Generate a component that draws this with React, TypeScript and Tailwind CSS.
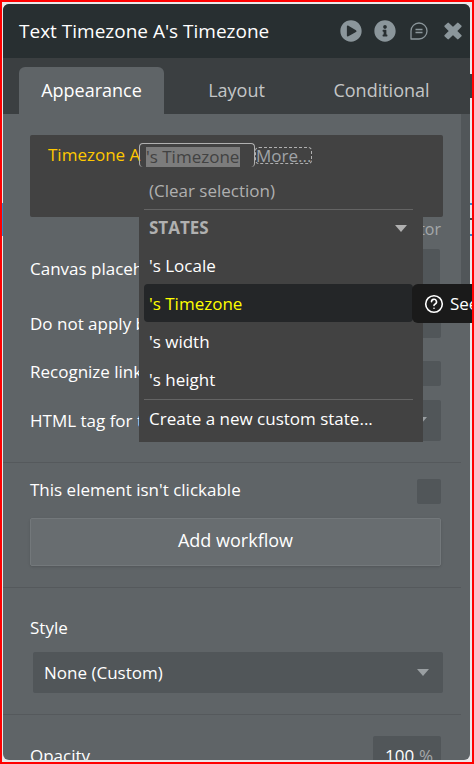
import React, { useState } from 'react';
import { FaPlayCircle, FaInfoCircle } from 'react-icons/fa';

const tabs = ['Appearance', 'Layout', 'Conditional'];
const states = ["'s Locale", "'s Timezone", "'s width", "'s height"];

const Caret: React.FC<{ className?: string }> = ({ className = '' }) => (
  <svg viewBox="0 0 12 7" className={`w-3 h-[7px] pointer-events-none ${className}`} fill="currentColor" aria-hidden="true">
    <path d="M0 0h12L6 7z" />
  </svg>
);

const Checkbox: React.FC<{ id: string }> = ({ id }) => (
  <input id={id} type="checkbox" className="appearance-none w-6 h-[25px] rounded-xs bg-[#515659] checked:bg-[#8b969b]" />
);

const Header: React.FC = () => (
  <header className="flex items-center justify-between h-[54px] shrink-0 pl-4 pr-2 rounded-t-md bg-[#282f31]">
    <h1 className="text-[19px] text-white whitespace-nowrap">Text Timezone A's Timezone</h1>
    <div className="flex items-center text-[#8b969b]">
      <button aria-label="Preview" className="mr-3"><FaPlayCircle size={22} /></button>
      <button aria-label="Info" className="mr-3.5"><FaInfoCircle size={22} /></button>
      <button aria-label="Comments" className="mr-4">
        <svg width="18" height="18" viewBox="0 0 18 18" fill="none" stroke="currentColor" strokeWidth="1.3">
          <path d="M1 17V9a8 8 0 1 1 8 8z" strokeLinejoin="round" />
          <path d="M5.5 7.5h7M5.5 10.5h7" />
        </svg>
      </button>
      <button aria-label="Close">
        <svg width="18" height="18" viewBox="0 0 18 18" fill="currentColor" stroke="currentColor" strokeWidth="2" strokeLinejoin="round">
          <path d="M4.2 1.6L9 6.2l4.8-4.6 2.8 2.7L11.9 9l4.7 4.7-2.8 2.7L9 11.8l-4.8 4.6-2.8-2.7L6.1 9 1.4 4.3z" />
        </svg>
      </button>
    </div>
  </header>
);

const StateMenu: React.FC = () => {
  const [active, setActive] = useState("'s Timezone");

  return (
    <div className="absolute left-[109px] top-8 z-10 w-[284px] pl-[5px] pr-2.5 bg-[#424242] text-white">
      <button className="block w-full h-[42px] pl-[5px] pt-1.5 text-left text-[#b0b0b0]">(Clear selection)</button>
      <div className="flex items-center justify-between h-[37px] pl-[5px] pr-1.5 border-t border-[#646464] font-bold text-[#b0b0b0]">
        STATES
        <Caret />
      </div>
      <div className="pb-px">
        {states.map((s) => (
          <div key={s} className="relative">
            <button
              onClick={() => setActive(s)}
              className={`block w-full h-[38px] pl-[5px] pt-0.5 text-left rounded-sm ${s === active ? 'bg-[#242628] text-[#ffff00]' : ''}`}
            >
              {s}
            </button>
            {s === active && (
              <a href="#reference" className="absolute left-[268px] top-0 flex items-center gap-1.5 h-[39px] w-[150px] pl-3 rounded-md bg-[#1a1a1a] text-white whitespace-nowrap">
                <svg width="20" height="20" viewBox="0 0 20 20" fill="none" stroke="currentColor" strokeWidth="1.6" strokeLinecap="round">
                  <circle cx="10" cy="10" r="8.3" />
                  <path d="M7.5 7.8a2.5 2.5 0 1 1 3.7 2.2c-.8.4-1.2.8-1.2 1.5" />
                  <path d="M10 14.2v.1" />
                </svg>
                See reference
              </a>
            )}
          </div>
        ))}
      </div>
      <button className="block w-full h-[43px] pl-[5px] pb-1 text-left border-t border-[#646464]">Create a new custom state...</button>
    </div>
  );
};

const Composer: React.FC = () => (
  <div className="relative h-[82px] mr-[-2px] pl-[18px] pt-2 rounded-xs bg-[#424242]">
    <div className="flex items-start">
      <span className="w-[91px] leading-6 text-[#ffc800] whitespace-nowrap">Timezone A</span>
      <div className="w-[116px] h-6 pl-1.5 pt-[3px] border border-b-0 border-[#b0b0b0] rounded">
        <input
          aria-label="Expression"
          readOnly
          value="'s Timezone"
          className="block w-[94px] h-5 bg-[#7c7c7c] text-[#424242] outline-none"
        />
      </div>
      <button className="mt-1 h-[17px] leading-[15px] border border-dashed border-[#b0b0b0] rounded-sm text-[#a0a4a8]">More...</button>
    </div>
    <StateMenu />
  </div>
);

export default function App() {
  const [tab, setTab] = useState('Appearance');

  return (
    <div className="relative h-screen border-2 border-[#ff0000] bg-[#e8e8ea] pl-px pr-0.5 pt-0.5 pb-0.5 overflow-hidden font-['Open_Sans','Noto_Sans',sans-serif] text-[17px] text-white">
      {/* edges of the canvas elements behind the panel */}
      <div className="absolute left-0 top-[201px] w-px h-[33px] bg-[#3a86c8]" />
      <div className="absolute right-0 top-[72px] w-0.5 h-6 bg-[#3b3f41]" />
      <div className="absolute right-0 top-[201px] w-0.5 h-[33px] border-y-2 border-[#3a86c8]" />
      <div className="absolute right-0 top-[216px] w-0.5 h-0.5 bg-[#444444]" />

      <main className="relative flex flex-col h-full rounded-md bg-[#5f6467]">
        <Header />
        <nav role="tablist" className="flex items-end h-14 shrink-0 px-4 bg-[#3b3f41] text-lg">
          {tabs.map((t) => (
            <button
              key={t}
              role="tab"
              aria-selected={t === tab}
              onClick={() => setTab(t)}
              className={`flex-1 h-[47px] pb-0.5 rounded-t-md ${t === tab ? 'bg-[#5f6467] text-white' : 'text-[#c4c6c7]'}`}
            >
              {t}
            </button>
          ))}
        </nav>

        <div className="relative flex-1 min-h-0 overflow-x-visible overflow-y-clip">
          {/* scrollbar thumb */}
          <div className="absolute right-0 top-0 w-[9px] h-[190px] bg-[#515659]" />

          <section className="h-[348px] mr-[9px] pl-[27px] pr-5 pt-[21px]">
            <Composer />
            <p className="h-8 text-right text-base text-[#a5a8aa]">Rich text editor</p>
            <div className="flex justify-between h-16">
              <label htmlFor="placeholder" className="leading-10">Canvas placeholder</label>
              <input id="placeholder" className="w-[200px] h-10 mr-px rounded-xs bg-[#515659]" />
            </div>
            <div className="flex justify-between h-[25px] mb-[23px]">
              <label htmlFor="bbcode" className="leading-[22px]">Do not apply bb-code</label>
              <Checkbox id="bbcode" />
            </div>
            <div className="flex justify-between h-[25px] mb-3.5">
              <label htmlFor="links" className="leading-[22px]">Recognize links and emails</label>
              <Checkbox id="links" />
            </div>
            <div className="relative flex items-center justify-between">
              <label htmlFor="tag">HTML tag for this element</label>
              <select id="tag" className="appearance-none w-40 h-[41px] px-3 rounded-xs bg-[#515659]">
                <option>normal</option>
              </select>
              <Caret className="absolute right-3.5 text-[#9a9fa2]" />
            </div>
          </section>

          <section className="h-[125px] mr-[9px] pl-[27px] pr-5 pt-4 border-t border-[#55595c]">
            <div className="flex justify-between h-[25px] mb-3.5">
              <label htmlFor="clickable" className="leading-[22px]">This element isn't clickable</label>
              <Checkbox id="clickable" />
            </div>
            <button className="w-full h-12 pb-1 rounded-xs border border-[#73787b] bg-[#686d70] text-lg shadow-sm">Add workflow</button>
          </section>

          <section className="h-[127px] mr-[9px] pl-[27px] pr-[18px] pt-[27px] border-t border-[#55595c]">
            <label htmlFor="style" className="block h-[37px]">Style</label>
            <div className="relative flex items-center ml-[3px]">
              <select id="style" className="appearance-none w-full h-[41px] px-[11px] rounded-xs bg-[#515659]">
                <option>None (Custom)</option>
              </select>
              <Caret className="absolute right-3.5 text-[#9a9fa2]" />
            </div>
          </section>

          <section className="flex justify-between mr-[9px] pl-[27px] pr-5 pt-[21px] border-t border-[#55595c]">
            <label htmlFor="opacity" className="leading-10">Opacity</label>
            <div className="flex items-center w-[68px] h-10 pl-3 gap-1 rounded-xs bg-[#515659]">
              <input id="opacity" defaultValue="100" className="w-[30px]" />
              <span className="text-[#a5a8aa]">%</span>
            </div>
          </section>
        </div>
      </main>
    </div>
  );
}
